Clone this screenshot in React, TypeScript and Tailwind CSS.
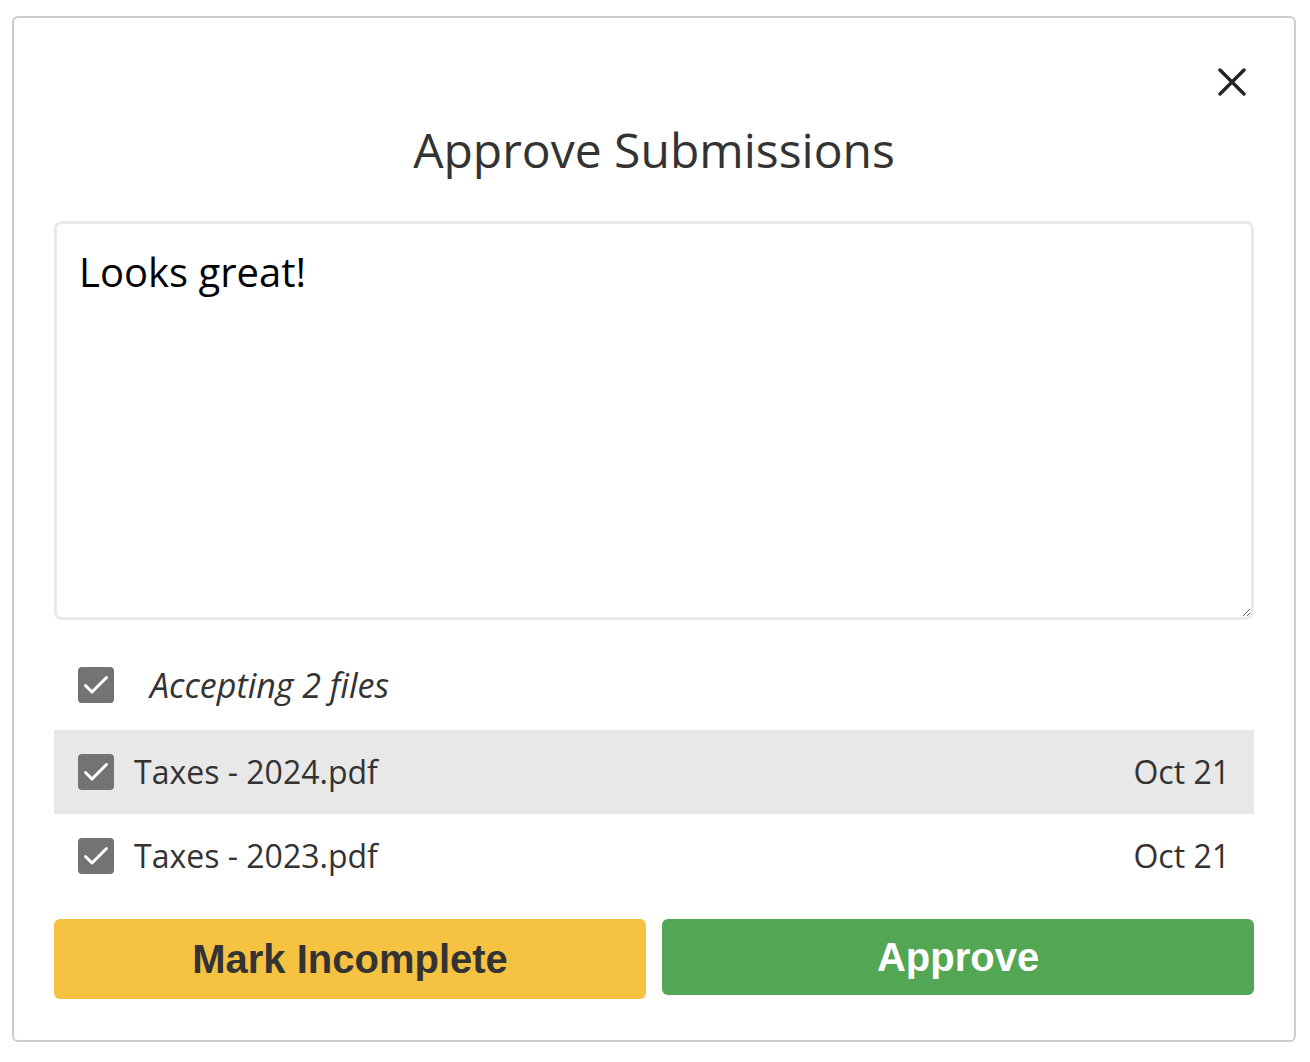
import React from "react";

const sans = { fontFamily: '"Open Sans", "Noto Sans", sans-serif' };
const arial = { fontFamily: '"Liberation Sans", Arial, sans-serif' };

function CheckBox() {
  return (
    <span className="flex h-[36px] w-[36px] shrink-0 items-center justify-center rounded-[4px] bg-[#737373]">
      <svg width="36" height="36" viewBox="0 0 36 36" fill="none">
        <path d="M7.5 18.5l6.5 6.5L28.5 10.5" stroke="#fff" strokeWidth="3" strokeLinecap="round" strokeLinejoin="round" />
      </svg>
    </span>
  );
}

function FileRow({ name, date, shaded }: { name: string; date: string; shaded?: boolean }) {
  return (
    <div className={`flex h-[84px] items-center pl-[24px] pr-[24px] ${shaded ? "bg-[#e8e8e8]" : ""}`}>
      <CheckBox />
      <span className="ml-[20px] text-[32px] text-[#333]" style={sans}>{name}</span>
      <span className="ml-auto text-[32px] text-[#333]" style={sans}>{date}</span>
    </div>
  );
}

export default function App() {
  return (
    <div className="min-h-[1062px] bg-white pt-[16px] pl-[12px]">
      <div className="flex h-[1026px] w-[1284px] flex-col rounded-[6px] border-2 border-[#cccccc] px-[40px]">
        <div className="flex justify-end pt-[50px] pr-[8px]">
          <button className="flex h-[28px] w-[28px] items-center justify-center">
            <svg width="28" height="28" viewBox="0 0 28 28" fill="none">
              <path d="M2 2L26 26M26 2L2 26" stroke="#222" strokeWidth="3.4" strokeLinecap="round" />
            </svg>
          </button>
        </div>
        <h2 className="mt-[22px] text-center text-[48px] leading-[64px] text-[#333]" style={sans}>
          Approve Submissions
        </h2>
        <textarea
          className="mt-[39px] h-[399px] w-full shrink-0 resize-y rounded-[8px] border-[3px] border-[#e9e9e9] px-[22px] py-[20px] text-[40px] leading-[56px] text-black outline-none"
          style={sans}
          defaultValue="Looks great!"
        />
        <div className="mt-[26px] flex h-[84px] items-center pl-[24px] pb-[6px]">
          <CheckBox />
          <span className="ml-[36px] text-[34px] italic text-[#333]" style={sans}>Accepting 2 files</span>
        </div>
        <FileRow name="Taxes - 2024.pdf" date="Oct 21" shaded />
        <FileRow name="Taxes - 2023.pdf" date="Oct 21" />
        <div className="mt-[21px] flex items-start gap-[16px]">
          <button
            className="h-[80px] flex-1 rounded-[6px] bg-[#f5c242] text-[40px] font-bold text-[#333]"
            style={arial}
          >
            Mark Incomplete
          </button>
          <button
            className="h-[76px] flex-1 rounded-[6px] bg-[#53a653] text-[40px] font-bold text-white"
            style={arial}
          >
            Approve
          </button>
        </div>
      </div>
    </div>
  );
}
